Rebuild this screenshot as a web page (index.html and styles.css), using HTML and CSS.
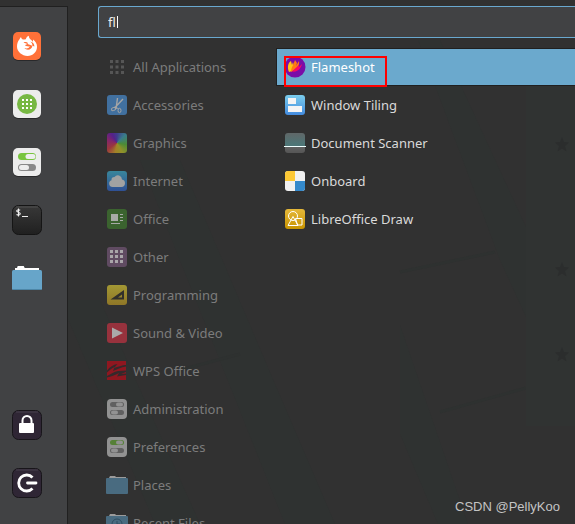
FILE: index.html
```html
<!DOCTYPE html>
<html lang="en">
<head>
<meta charset="utf-8">
<title>Application Menu</title>
<link rel="stylesheet" href="styles.css">
</head>
<body>
<svg class="backdrop" viewBox="0 0 575 524" preserveAspectRatio="xMinYMin slice" aria-hidden="true">
  <path d="M418 40h22l92 200v90l-32-70z M60 300l40 0 100 224h-45z M140 160l40 0 95 224 60 140h-50z M400 325l68 199h-30l-38-90z" fill="#2f3231"/>
  <path d="M400 272l95-20 M440 412l86-24 M180 370l60-16" stroke="#2e3130" stroke-width="3"/>
  <path d="M526 80h49v346h-49z" fill="#303332"/>
  <g fill="#2b2d2d">
    <path id="star" d="M562 137l2 5 5 .5-4 3.500 1.500 5.500-4.500-3-4.500 3 1.500-5.500-4-3.500 5-.5z"/>
    <use href="#star" y="125"/>
    <use href="#star" y="210"/>
  </g>
</svg>
<div class="menu">
  <nav class="sidebar" aria-label="Favorites">
    <button class="fav" aria-label="Firefox"><svg viewBox="0 0 32 32">
      <rect x="2" y="3" width="28" height="28" rx="5" fill="#29292b"/><rect x="2" y="2" width="28" height="28" rx="5" fill="#ff7139"/>
      <path d="M8.500 9.200c.4-1 .9-1.700 1.500-2.200.2 1.200.8 2 1.800 2.500 1 0 2-.2 3-.3.500-1.800 1.500-2.700 3-3.400 0 2 .8 2.900 2.200 3.900 1 .8 1.700 1.500 2 2.300V9.600c2.600 1.900 4 4.300 4 7.200C26 22 21.800 26 16.500 26S6 22 6 16.600c0-3 .9-5.600 2.500-7.400z" fill="#fff"/>
      <path d="M12.500 12.600c1-.8 2-.5 2.700-.5l1.800.9c-.3 1.300-1.500 1.300-2.400 1.800l-.3 1.300c1.500-.4 3 .7 4.400.2-.7 2.100-3.300 2.700-5.300 1.700 2.500 3.200 8 1.700 8-2.500 0-2-1-3.200-2.300-3.800 2.700-.2 4.300 2 4.300 4.800" fill="#ff7139"/>
    </svg></button>
    <button class="fav" aria-label="Software Manager"><svg viewBox="0 0 32 32">
      <rect x="2" y="3" width="28" height="28" rx="5" fill="#29292b"/><rect x="2" y="2" width="28" height="28" rx="5" fill="#ececec"/><circle cx="16" cy="16" r="10" fill="#77b843"/>
      <path d="M11 11h2v2h-2zm4 0h2v2h-2zm4 0h2v2h-2zm-8 4h2v2h-2zm4 0h2v2h-2zm4 0h2v2h-2zm-8 4h2v2h-2zm4 0h2v2h-2zm4 0h2v2h-2z" fill="#fff"/>
    </svg></button>
    <button class="fav" aria-label="System Settings"><svg viewBox="0 0 32 32">
      <rect x="2" y="3" width="28" height="28" rx="5" fill="#29292b"/><rect x="2" y="2" width="28" height="28" rx="5" fill="#ececec"/>
      <rect x="7" y="7" width="18" height="7" rx="3.500" fill="#78c43e"/><rect x="14.500" y="8" width="10" height="5" rx="2.500" fill="#eee"/>
      <rect x="7" y="18" width="18" height="7" rx="3.500" fill="#898989"/><rect x="8" y="19" width="10" height="5" rx="2.500" fill="#eee"/>
    </svg></button>
    <button class="fav" aria-label="Terminal"><svg viewBox="0 0 32 32">
      <defs><linearGradient id="term" x2="0" y2="1"><stop stop-color="#383838"/><stop offset="1" stop-color="#202020"/></linearGradient></defs>
      <rect x="1.500" y="1.500" width="29" height="29" rx="6" fill="url(#term)" stroke="#151515"/><path d="M5 3h22" stroke="#505050"/>
      <path d="M7.500 4.500v8M9.200 6.300c-2-1-3.700-.3-3.500.8.2 1.300 3.700 1.100 3.600 2.700-.1 1.200-2 1.600-3.800.7M11 12.500h6" fill="none" stroke="#eee" stroke-width="1.100"/>
    </svg></button>
    <button class="fav" aria-label="Files"><svg viewBox="0 0 32 32">
      <path d="M4 10V6h2l.7-2h6l1 2H28v4z" fill="#fff"/><rect x="1" y="8" width="30" height="20" rx="1.500" fill="#67a5c9"/><path d="M2 27.500h28" stroke="#4d86a7"/>
    </svg></button>
    <button class="fav session" aria-label="Lock Screen"><svg viewBox="0 0 32 32">
      <rect x="1.500" y="1.500" width="29" height="29" rx="6" fill="#2f2635" stroke="#18151a"/><path d="M5 3h22" stroke="#49414e"/>
      <path d="M11.500 15v-3.500a4.500 4.500 0 0 1 9 0V15" fill="none" stroke="#fff" stroke-width="2"/><rect x="8" y="14" width="15" height="10" rx="1" fill="#fff"/>
    </svg></button>
    <button class="fav" aria-label="Log Out"><svg viewBox="0 0 32 32">
      <rect x="1.500" y="1.500" width="29" height="29" rx="6" fill="#2f2635" stroke="#18151a"/><path d="M5 3h22" stroke="#49414e"/>
      <path d="M21.500 10.500a8 8 0 1 0 0 11" fill="none" stroke="#fff" stroke-width="2.800"/><path d="M16.500 16h8.500" stroke="#fff" stroke-width="2.800" stroke-linecap="round"/>
    </svg></button>
  </nav>
  <main class="content">
    <div class="search-box">
      <input class="search" type="text" aria-label="Search applications" value="fl">
      <span class="caret" aria-hidden="true"></span>
    </div>
    <div class="columns">
      <ul class="list categories">
        <li><button class="item"><svg viewBox="0 0 22 22"><path d="M4 4h3v3H4zm5.500 0h3v3h-3zM15 4h3v3h-3zM4 9.500h3v3H4zm5.500 0h3v3h-3zm5.500 0h3v3h-3zM4 15h3v3H4zm5.500 0h3v3h-3zm5.500 0h3v3h-3z" fill="#565656"/></svg>All Applications</button></li>
        <li><button class="item"><svg viewBox="0 0 22 22"><rect x="1" y="1" width="20" height="20" rx="3" fill="#41709f"/>
          <path d="M11.500 4l-1.500 11M17 5l-8.500 9" stroke="#a5a5a5" stroke-width="1.400"/><ellipse cx="7.600" cy="15" rx="2.200" ry="1.500" transform="rotate(-25 7.600 15)" fill="none" stroke="#a5a5a5"/><ellipse cx="13.500" cy="16.500" rx="1.500" ry="2.200" fill="none" stroke="#a5a5a5"/><path d="M9 13.500l3.500 1" stroke="#a5a5a5"/></svg>Accessories</button></li>
        <li><button class="item"><span class="wheel"></span>Graphics</button></li>
        <li><button class="item"><svg viewBox="0 0 22 22"><defs><linearGradient id="net" x2="0" y2="1"><stop stop-color="#39869b"/><stop offset="1" stop-color="#2f5094"/></linearGradient></defs><rect x="1" y="1" width="20" height="20" rx="3" fill="url(#net)"/>
          <path d="M6.500 17a3.500 3.500 0 0 1-1-6.800 3 3 0 0 1 3-3.200 4.200 4.200 0 0 1 7.500 2.500 3.800 3.800 0 0 1-.5 7.500z" fill="#a2a2a2"/></svg>Internet</button></li>
        <li><button class="item"><svg viewBox="0 0 22 22"><rect x="1" y="1" width="20" height="20" rx="3" fill="#3b632f"/>
          <path d="M5 6h7v7H5zM14 6h3v1h-3zm0 3h3v1h-3zm0 3h3v1h-3zM5 15h9v1H5z" fill="#a8aba7"/></svg>Office</button></li>
        <li><button class="item"><svg viewBox="0 0 22 22"><rect x="1" y="1" width="20" height="20" rx="3" fill="#604b62"/>
          <path d="M4 4h3v3H4zm5 0h3v3H9zm5 0h3v3h-3zM4 9h3v3H4zm5 0h3v3H9zm5 0h3v3h-3zM4 14h3v3H4zm5 0h3v3H9zm5 0h3v3h-3z" fill="#a9a5a9"/></svg>Other</button></li>
        <li><button class="item"><svg viewBox="0 0 22 22"><defs><linearGradient id="prog" x2="0" y2="1"><stop stop-color="#a39834"/><stop offset="1" stop-color="#8f7627"/></linearGradient></defs><rect x="1" y="1" width="20" height="20" rx="3" fill="url(#prog)"/>
          <path fill-rule="evenodd" d="M4.500 15.500L18 6v9.500zM12 13.500h4v-3z" fill="#32302b"/></svg>Programming</button></li>
        <li><button class="item"><svg viewBox="0 0 22 22"><rect x="1" y="1" width="20" height="20" rx="3" fill="#97323d"/><path d="M6 5.500L17 11 6 16.500z" fill="#aaa"/></svg>Sound &amp; Video</button></li>
        <li><button class="item"><svg viewBox="0 0 22 22"><path d="M1 1h19v19H1z" fill="#8f1720"/>
          <path d="M1 10.500C4 7 7 4.500 11.500 4L8 8c4-1 8-3 12-3v1.500c-5 .5-9 3-13 4.500l1.500-4C5 8.500 3 11 1 12.500zM1 16c4-2 7-4.500 11-5l8-.5v1.500l-5 2 5-.5V15l-9 1.500 2-3.500C9 15 5 17 1 17.500z" fill="#35292b"/></svg>WPS Office</button></li>
        <li><button class="item"><svg viewBox="0 0 22 22"><rect x="1" y="1" width="20" height="20" rx="4" fill="#929292"/><rect x="4" y="4" width="14" height="5" rx="2.500" fill="#606060"/><rect x="10" y="4.500" width="7" height="4" rx="2" fill="#929292"/><rect x="4" y="12" width="14" height="5" rx="2.500" fill="#606060"/><rect x="5" y="12.500" width="7" height="4" rx="2" fill="#929292"/></svg>Administration</button></li>
        <li><button class="item"><svg viewBox="0 0 22 22"><rect x="1" y="1" width="20" height="20" rx="4" fill="#929292"/><rect x="4" y="4" width="14" height="5" rx="2.500" fill="#558036"/><rect x="10" y="4.500" width="7" height="4" rx="2" fill="#929292"/><rect x="4" y="12" width="14" height="5" rx="2.500" fill="#606060"/><rect x="5" y="12.500" width="7" height="4" rx="2" fill="#929292"/></svg>Preferences</button></li>
        <li><button class="item"><svg viewBox="0 0 22 22"><path d="M3 7V4l1-2h5l1 1h10v4z" fill="#9b9b9b"/><rect y="4" width="22" height="16" rx="1" fill="#496b80"/></svg>Places</button></li>
        <li><button class="item"><svg viewBox="0 0 22 22"><path d="M3 7V4l1-2h5l1 1h10v4z" fill="#9b9b9b"/><rect y="4" width="22" height="16" rx="1" fill="#496b80"/><circle cx="11" cy="12" r="5" fill="none" stroke="#2f4d60"/><path d="M11 9v3h3" fill="none" stroke="#2f4d60"/></svg>Recent Files</button></li>
      </ul>
      <ul class="list results">
        <li class="selected"><button class="item"><svg viewBox="0 0 22 22"><circle cx="11" cy="11" r="10.500" fill="#7a0ca8"/>
          <path d="M5 16C3 11 4 7 7 5l1 4 1-3c1 3 0 6-1 9z" fill="#ffc414"/><path d="M7 16c0-4 2-6 4-12l2 3-1 3 3-5c1 5-3 8-8 11z" fill="#ff7b13"/><path d="M8 16c2-3 5-5 7-7l0 2 3-3c-1 5-5 8-10 8z" fill="#f80767"/></svg>Flameshot</button>
          <span class="marker" aria-hidden="true"></span></li>
        <li><button class="item"><svg viewBox="0 0 22 22"><defs><linearGradient id="tile" x2="0" y2="1"><stop stop-color="#7bcdec"/><stop offset="1" stop-color="#438bdf"/></linearGradient></defs><rect x="1" y="1" width="20" height="20" rx="3" fill="url(#tile)"/><path d="M4 4h8v6H4zM4 12h14v6H4z" fill="#f4f4f4"/></svg>Window Tiling</button></li>
        <li><button class="item"><svg viewBox="0 0 22 22"><defs><linearGradient id="scan" x2="0" y2="1"><stop stop-color="#606768"/><stop offset=".62" stop-color="#4c7778"/><stop offset=".68" stop-color="#626262"/><stop offset="1" stop-color="#555"/></linearGradient></defs><rect x="1" y="1" width="20" height="20" rx="3" fill="url(#scan)"/><path d="M0 14.500h22" stroke="#f0ffff"/></svg>Document Scanner</button></li>
        <li><button class="item"><svg viewBox="0 0 22 22"><rect x="1" y="1" width="20" height="20" rx="3" fill="#f0f0f0"/><path d="M4 1h7v10H1V4a3 3 0 0 1 3-3z" fill="#fcc835"/><path d="M11 11h10v7a3 3 0 0 1-3 3h-7z" fill="#3489cb"/></svg>Onboard</button></li>
        <li><button class="item"><svg viewBox="0 0 22 22"><defs><linearGradient id="draw" x2="0" y2="1"><stop stop-color="#e5b83a"/><stop offset="1" stop-color="#c89400"/></linearGradient></defs><rect x="1" y="1" width="20" height="20" rx="3" fill="url(#draw)"/><circle cx="9" cy="8" r="4.500" fill="none" stroke="#fff"/><path d="M9 8.500l-5 9h10zM11.500 10.500h6.500v6.500h-4.500z" fill="none" stroke="#fff"/></svg>LibreOffice Draw</button></li>
      </ul>
    </div>
  </main>
</div>
<p class="credit">CSDN @PellyKoo</p>
</body>
</html>
```
FILE: styles.css
```css
* {
  box-sizing: border-box;
}

body {
  margin: 0;
  height: 100vh;
  overflow: hidden;
  background: #313131;
  color: #dadada;
  font: 13px/20px "Noto Sans", "Open Sans", sans-serif;
}

button {
  padding: 0;
  border: 0;
  background: none;
  color: inherit;
  font: inherit;
  text-align: left;
}

svg {
  display: block;
  flex: none;
}

.backdrop {
  position: absolute;
  inset: 0;
  width: 100%;
  height: 100%;
}

.menu {
  position: relative;
  display: flex;
  height: 100%;
  padding-top: 6px;
}

.sidebar {
  display: flex;
  flex: none;
  flex-direction: column;
  gap: 26px;
  width: 68px;
  padding: 23px 0 25px 11px;
  border-top: 1px solid #202020;
  border-right: 1px solid #202020;
  background: #414244;
}

.fav svg {
  width: 32px;
  height: 32px;
}

.session {
  margin-top: auto;
}

.content {
  display: flex;
  flex: 1;
  flex-direction: column;
  min-width: 0;
  padding-left: 30px;
}

.search-box {
  position: relative;
  flex: none;
}

.search {
  display: block;
  width: 100%;
  height: 32px;
  padding: 0 9px;
  border: 1px solid #69a8cf;
  border-right: 0;
  border-radius: 3px 0 0 3px;
  outline: 0;
  background: #414244;
  color: #eee;
  font: inherit;
}

.caret {
  position: absolute;
  top: 10px;
  left: 19px;
  width: 1px;
  height: 12px;
  background: #fff;
}

.columns {
  display: flex;
  padding-top: 10px;
}

.list {
  margin: 0;
  padding: 0;
  list-style: none;
}

.list li {
  height: 38px;
  padding: 0 7px;
  border: 1px solid transparent;
}

.categories {
  flex: none;
  width: 178px;
  color: #7c7c7c;
}

.results {
  flex: 1;
}

.item {
  display: flex;
  align-items: center;
  gap: 5px;
  width: 100%;
  height: 36px;
  white-space: nowrap;
}

.item svg {
  width: 22px;
  height: 22px;
}

.wheel {
  width: 20px;
  height: 20px;
  margin: 1px;
  border-radius: 3px;
  background: conic-gradient(#403b8c, #397c8b 45deg, #4c8b35 100deg, #91912a 150deg, #a28128 190deg, #9b373d 235deg, #83256a 290deg, #55218a 330deg, #403b8c);
}

.list .selected {
  position: relative;
  border-color: #202020;
  border-right: 0;
  background: #6ba9cd;
  color: #fff;
}

.marker {
  position: absolute;
  top: 7px;
  left: 7px;
  width: 103px;
  height: 31px;
  border: 2px solid #f00;
}

.credit {
  position: absolute;
  right: 15px;
  bottom: 7px;
  margin: 0;
  color: #c4c4c4;
  font: 13px/20px "Liberation Sans", sans-serif;
}
```
